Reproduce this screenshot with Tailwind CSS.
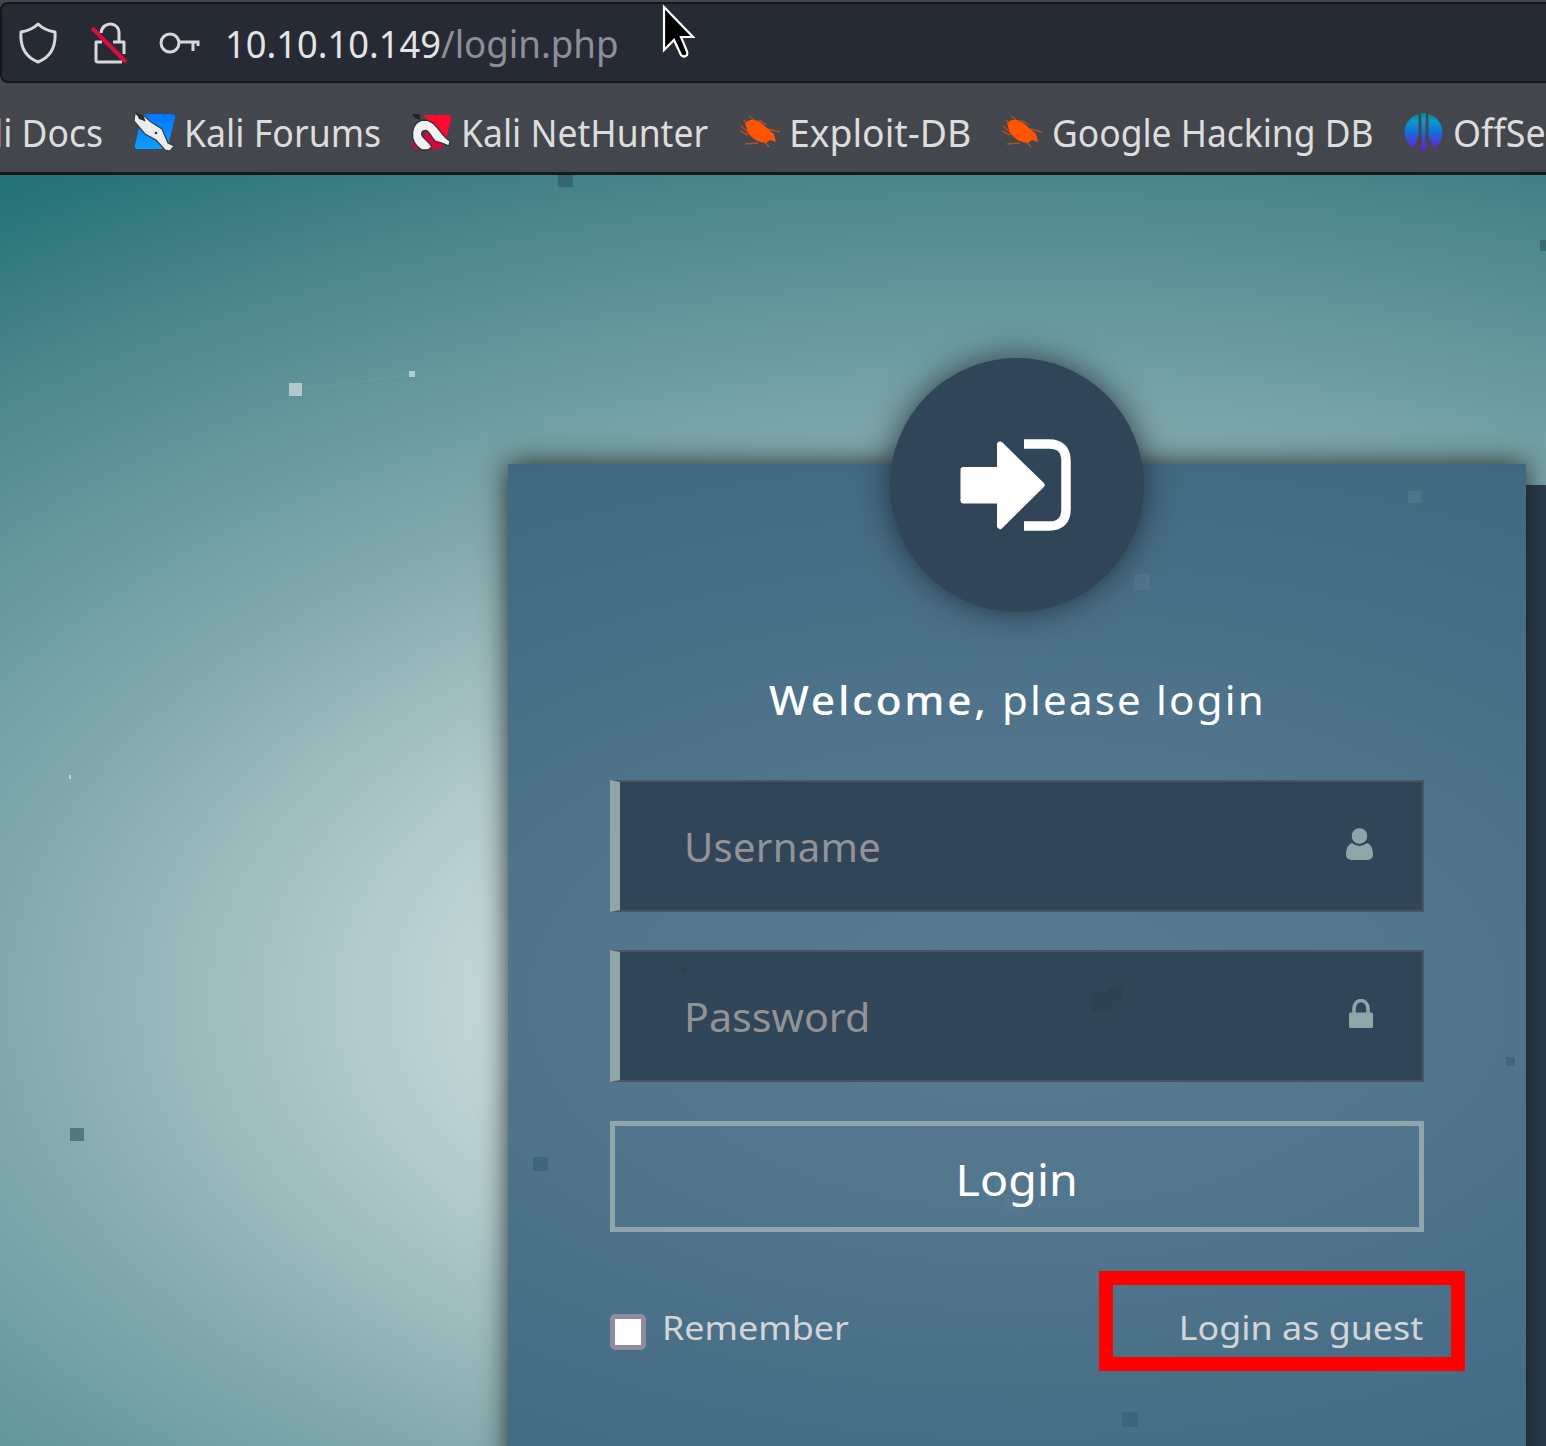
<!DOCTYPE html>
<html lang="en"><head><meta charset="utf-8"><title>Login</title>
<script src="https://cdn.jsdelivr.net/npm/@tailwindcss/browser@4"></script></head>
<body class="w-[1546px] h-[1446px] overflow-hidden relative bg-[#44464d] font-['Noto_Sans',sans-serif]">
<header class="h-[175px] flex flex-col border-b-[3px] border-[#17181d] text-[39px] text-[#dddddd] whitespace-nowrap">
  <div class="mt-[2px] h-[81px] w-[1560px] border-2 border-[#15161a] rounded-l-lg bg-[#262a35] flex items-center pl-4 pb-[1px] shrink-0">
    <svg class="w-10 h-[42px] mt-[2px]" viewBox="0 0 40 42" fill="none" stroke="#d8d8da" stroke-width="3" stroke-linejoin="round"><path d="M20 2C15 7 9 9 3 10C2 24 7 35 20 40C33 35 38 24 37 10C31 9 25 7 20 2Z"/></svg>
    <svg class="ml-[32px] w-10 h-[44px] mt-[2px]" viewBox="0 0 40 44" fill="none" stroke="#d8d8da" stroke-width="3" stroke-linejoin="round"><path d="M11 12C12 0 29 0 29 12V21M23 21H34V33M12 21H6V39Q6 41 8 41H32"/><path d="M2 7L36 41" stroke="#dd0b40" stroke-width="4"/></svg>
    <svg class="ml-[28px] w-[43px] h-[24px] mt-[1px]" viewBox="0 0 43 24" fill="none" stroke="#d8d8da" stroke-width="3"><circle cx="12" cy="12" r="9"/><path d="M21 11H41.5M35 11V20M40 11V15"/></svg>
    <div class="ml-[24px] flex leading-[50px] mt-[2px]">
      <span class="w-[216px]"><span class="inline-block origin-left scale-x-[.93] text-[#e4e4e6]">10.10.10.149</span></span>
      <span class="inline-block origin-left scale-x-[.94] text-[#8d8f97]">/login.php</span>
    </div>
  </div>
  <nav class="flex-1 flex items-center pt-[9px] leading-[50px] *:shrink-0">
    <span class="w-[134px]"><span class="inline-block origin-left scale-x-[.91] -ml-1.5">li Docs</span></span>
    <svg class="w-[42px] h-[40px]" viewBox="0 0 42 40">
      <defs><linearGradient id="kb" x2="0" y2="1"><stop stop-color="#0074ff"/><stop offset="1" stop-color="#0aa0ff"/></linearGradient></defs>
      <path d="M8 2H38Q42 2 41 6L34 34Q33 37 29 37H4Q0 37 1 33Z" fill="url(#kb)"/>
      <path d="M1 1L11 9L8 2L17 10L28 17L34 31L40 34L36 39L31 38L22 28L11 22L0 9Z" fill="#ececec" stroke="#3a3c40" stroke-width="1.2"/>
      <path d="M2 0L9 4L11 9L5 7Z" fill="#292b30"/><circle cx="22" cy="21" r="1.3" fill="#333"/>
    </svg>
    <span class="ml-[8px] w-[227px]"><span class="inline-block origin-left scale-x-[.915]">Kali Forums</span></span>
    <svg class="w-[42px] h-[40px]" viewBox="0 0 42 40">
      <path d="M12 3H37Q41 3 40 7L35 28L20 12Z" fill="#ff0b30"/><path d="M0 31L4 37H30L33 29L20 18Z" fill="#d4083c"/>
      <path d="M11 38C-3 31 -1 9 13 8C26 8 29 24 39 29L38 34L31 31L24 29C17 21 18 17 12 19C7 24 17 28 21 35L17 38Z" fill="#f2f2f2" stroke="#30323a" stroke-width="1.3"/>
      <path d="M1 2L8 2L10 8L4 6Z" fill="#222329"/>
    </svg>
    <span class="ml-[8px] w-[279px]"><span class="inline-block origin-left scale-x-[.911]">Kali NetHunter</span></span>
    <svg class="w-[40px] h-[34px]" viewBox="0 0 40 34"><g id="bug"><path d="M5 8Q11 2 20 7L34 19L36 27L30 25L26 28Q15 27 8 18Z" fill="#ff5500"/><path d="M9 1L18 8M1 11L8 17M0 16L8 20M19 5L27 10M28 14L40 17M33 22L27 21M5 29L18 28M24 26L29 32M4 5L8 9" stroke="#e4540f" stroke-opacity=".7" stroke-width="1.4" fill="none"/></g></svg>
    <span class="ml-[9px] w-[213px]"><span class="inline-block origin-left scale-x-[.957]">Exploit-DB</span></span>
    <svg class="w-[40px] h-[34px]" viewBox="0 0 40 34"><use href="#bug"/></svg>
    <span class="ml-[10px] w-[352px]"><span class="inline-block origin-left scale-x-[.908]">Google Hacking DB</span></span>
    <svg class="w-[40px] h-[40px]" viewBox="0 0 40 40"><defs><linearGradient id="os" gradientUnits="userSpaceOnUse" x1="0" y1="1" x2="0" y2="39"><stop stop-color="#06878c"/><stop offset=".2" stop-color="#079cc5"/><stop offset=".5" stop-color="#126fdc"/><stop offset="1" stop-color="#7412d4"/></linearGradient></defs>
      <g fill="url(#os)"><path d="M14.5 2V25L9 36C-3 28 -3 8 14.5 2Z"/><path d="M24.5 2V25L30 36C42 28 42 8 24.5 2Z"/><path d="M17 1H22L21 30L22.500 36L19.500 39L16.500 36L18 30Z"/></g></svg>
    <span class="ml-[9px]"><span class="inline-block origin-left scale-x-[.92]">OffSec</span></span>
  </nav>
</header>
<main class="relative h-[1271px] overflow-hidden bg-[radial-gradient(1850px_1000px_at_1017px_825px,#ecf2f3_0%,#c5d7d9_28%,#84abae_54%,#4b868b_82.5%,#267378_97%)] text-white flex">
  <svg class="absolute inset-0 w-[1546px] h-[1271px]" viewBox="0 175 1546 1271">
    <path d="M302 389L409 375" stroke="#fff" stroke-opacity=".05"/>
    <g fill="#2f5563" fill-opacity=".6"><rect x="558" y="175" width="15" height="12"/><rect x="1540" y="240" width="8" height="11"/><rect x="70" y="1128" width="14" height="13"/></g>
    <g fill="#fff" fill-opacity=".5"><rect x="289" y="383" width="13" height="13"/><rect x="409" y="371" width="6" height="6"/><rect x="69" y="775" width="2" height="4"/></g>
  </svg>
  <div class="absolute left-[1525px] top-[310px] w-[100px] h-[961px] bg-[#293b4c]"></div>
  <section class="relative shrink-0 ml-[508px] mt-[289px] w-[1018px] h-[1100px] px-[102px] bg-[radial-gradient(1850px_1000px_at_509px_536px,#577a91_0%,#52768e_22%,#426a83_54%,#386078_82%)] shadow-[0_0_26px_rgba(25,30,25,.9)] flex flex-col">
    <svg class="absolute left-0 top-0 w-[1018px] h-[982px]" viewBox="508 464 1018 982">
      <g fill="#fff" fill-opacity=".07"><rect x="1408" y="491" width="13" height="12"/><rect x="1134" y="574" width="16" height="16" fill-opacity=".05"/><rect x="1003" y="1198" width="16" height="15" fill-opacity=".02"/></g>
      <g fill="#2c5872" fill-opacity=".45"><rect x="533" y="1157" width="15" height="14"/><rect x="1506" y="1057" width="9" height="9"/><rect x="1122" y="1412" width="16" height="15"/></g>
    </svg>
    <div class="relative self-center -mt-[106px] size-[254px] shrink-0 rounded-full bg-[#304558] shadow-[0_0_32px_rgba(25,35,45,.8)] flex items-center justify-center pr-[3px]">
      <svg class="w-[111px] h-[92px]" viewBox="0 0 111 92"><path d="M3.5 31H40V5.5L81.5 46L40 87V61.500H3.5Z" fill="#fff" stroke="#fff" stroke-width="6" stroke-linejoin="round"/><path d="M64 5H89Q106 5 106 22V70Q106 87 89 87H64" fill="none" stroke="#fff" stroke-width="9.5"/></svg>
    </div>
    <h1 class="relative mt-[60px] h-[56px] shrink-0 leading-[56px] text-[40px] whitespace-nowrap pl-[159px] flex"><span class="w-[233px]"><span class="inline-block origin-left scale-x-[1.06] font-medium tracking-[2.6px]">Welcome,</span></span><span class="inline-block origin-left scale-x-[1.05] tracking-[2.1px]">please login</span></h1>
    <div class="relative mt-[52px] h-[132px] shrink-0 border-2 border-l-[10px] border-[#4b5464] border-l-[#8fa5a8] bg-[#314558] flex items-center justify-between pl-[64px] pr-[49px]">
      <span class="text-[40px] tracking-[.3px] text-[#939396] leading-[56px] mt-[1px]">Username</span>
      <svg class="w-[27px] h-[32px] -mt-[4px]" viewBox="0 0 27 32" fill="#8fa5a8"><path d="M6 15Q13.5 21 21 15Q27 17 27 27Q27 31 22 32H5Q0 31 0 27Q0 17 6 15Z"/><circle cx="13.5" cy="8" r="8.3" stroke="#314558" stroke-width="1"/></svg>
    </div>
    <div class="relative mt-[38px] h-[132px] shrink-0 border-2 border-l-[10px] border-[#4b5464] border-l-[#8fa5a8] bg-[#314558] flex items-center justify-between pl-[64px] pr-[49px]">
      <svg class="absolute inset-0 size-full" viewBox="620 952 801 128"><g fill="#273c4d" fill-opacity=".4"><path d="M1092 992H1107V988H1122V1000H1112V1011H1092Z"/><rect x="681" y="967" width="6" height="6"/></g></svg>
      <span class="text-[40px] text-[#939396] leading-[56px] mt-[1px] origin-left scale-x-[1.03]">Password</span>
      <svg class="w-[24px] h-[29px] -mt-[5px]" viewBox="0 0 24 29"><path d="M5 15V9.5A7 8 0 0 1 19 9.5V15" fill="none" stroke="#8fa5a8" stroke-width="3.6"/><rect y="13.5" width="24" height="15.5" rx="1.5" fill="#8fa5a8"/></svg>
    </div>
    <div class="relative mt-[39px] h-[111px] shrink-0 border-5 border-[#90a6aa] flex items-center justify-center text-[44px] leading-[60px] pt-[4px]"><span class="scale-x-[1.06]">Login</span></div>
    <div class="relative mt-[70px] h-[50px] shrink-0 flex items-center text-[32px] leading-[50px] text-[#d3d5d8] whitespace-nowrap">
      <span class="mt-[9px] size-[36px] rounded-[5px] border-5 border-[#918c9d] bg-white"></span>
      <span class="ml-[16px] mt-[1px] origin-left scale-x-[1.12]">Remember</span>
      <span class="ml-auto mr-[1px] mt-[1px] origin-right scale-x-[1.12]">Login as guest</span>
    </div>
  </section>
  <div class="absolute left-[1099px] top-[1096px] w-[366px] h-[100px] border-[14px] border-[#ff0000]"></div>
</main>
<svg class="absolute left-[661px] top-[4px] w-[36px] h-[58px]" viewBox="0 0 36 58"><path d="M3 3V46L13 36L20 51Q23 54 26 51Q27 49 25 45L20 33H32Z" fill="#000" stroke="#fff" stroke-width="2.2"/></svg>
</body></html>
